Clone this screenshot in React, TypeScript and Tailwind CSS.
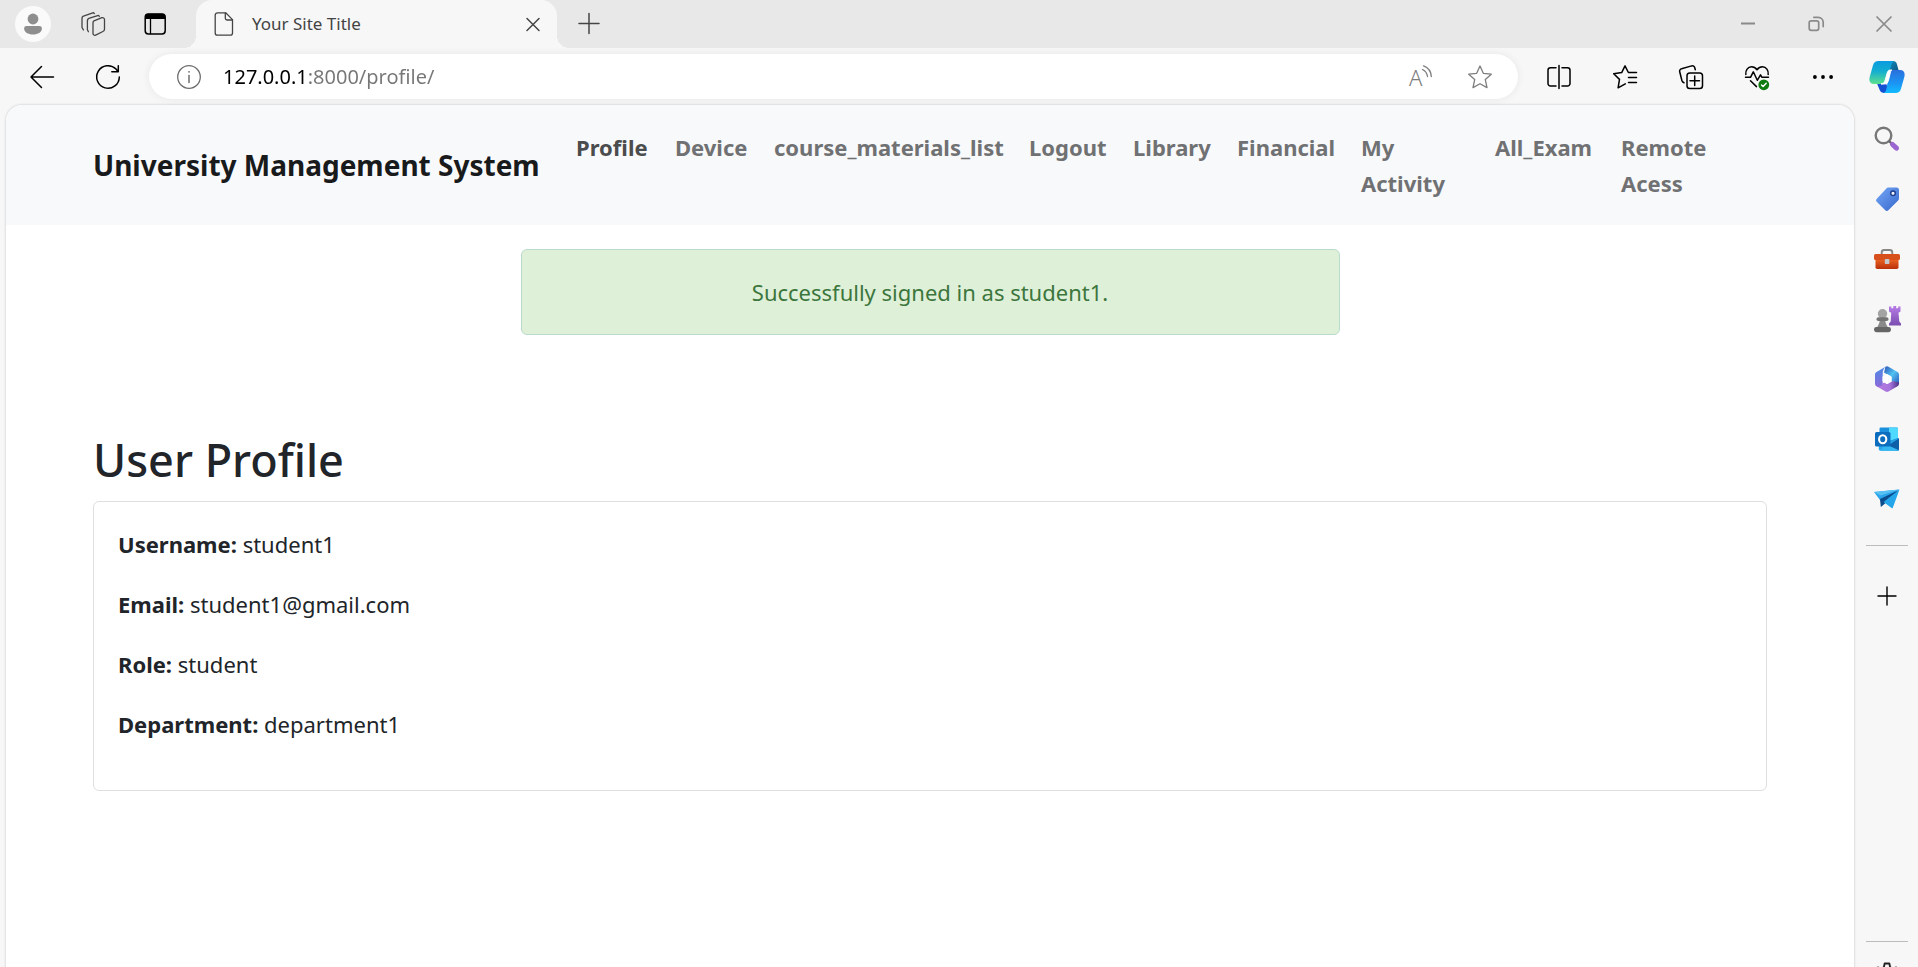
import type { ReactNode } from "react";

type NavItem = { label: string; href: string; active?: boolean; width: string };

const navItems: NavItem[] = [
  { label: "Profile", href: "#profile", active: true, width: "w-[99px]" },
  { label: "Device", href: "#device", width: "w-[99px]" },
  { label: "course_materials_list", href: "#materials", width: "w-[255px]" },
  { label: "Logout", href: "#logout", width: "w-[104px]" },
  { label: "Library", href: "#library", width: "w-[104px]" },
  { label: "Financial", href: "#financial", width: "w-[124px]" },
  { label: "My Activity", href: "#activity", width: "w-[134px]" },
  { label: "All_Exam", href: "#exam", width: "w-[126px]" },
  { label: "Remote Acess", href: "#remote", width: "w-[134px]" },
];

const profile = [
  { label: "Username:", value: "student1" },
  { label: "Email:", value: "student1@gmail.com" },
  { label: "Role:", value: "student" },
  { label: "Department:", value: "department1" },
];

function Icon({ children, size = "size-6" }: { children: ReactNode; size?: string }) {
  return (
    <svg
      viewBox="0 0 24 24"
      className={`${size} shrink-0 overflow-visible`}
      fill="none"
      stroke="currentColor"
      strokeWidth="1.3"
      strokeLinecap="round"
      strokeLinejoin="round"
      aria-hidden="true"
    >
      {children}
    </svg>
  );
}

function BarButton({ label, className, children }: { label: string; className: string; children: ReactNode }) {
  return (
    <button type="button" aria-label={label} className={`flex h-full shrink-0 items-center justify-center ${className}`}>
      {children}
    </button>
  );
}

function TabStrip() {
  return (
    <div className="flex h-12 items-stretch bg-[#e8e8e8] pl-[3px] text-[#444]">
      <BarButton label="Account" className="w-15">
        <svg viewBox="0 0 36 36" className="size-9" aria-hidden="true">
          <circle cx="18" cy="18" r="18" fill="#fafafa" />
          <circle cx="18" cy="13" r="5.4" fill="#8e8e8e" />
          <path d="M11.5 20h13a2.4 2.4 0 0 1 2.4 2.4c0 3.700-4 6-8.900 6s-8.900-2.300-8.900-6a2.400 2.400 0 0 1 2.400-2.400z" fill="#8e8e8e" />
        </svg>
      </BarButton>
      <BarButton label="Workspaces" className="w-15">
        <Icon>
          <path d="M13 8.800 20.900 5.700a2 2 0 0 1 2.600 1.900v9.600a2.500 2.500 0 0 1-1.600 2.300l-7.300 3.600a1.800 1.800 0 0 1-2.600-1.600V10.800a2.500 2.500 0 0 1 1-2z" />
          <path d="M18.300 4.200 17.500 3.400 8.500 6.200A2.800 2.800 0 0 0 6.400 9v8.700l1 2" />
          <path d="M13.300 1.500 12.500.7 3.200 3.900A2.500 2.500 0 0 0 1 6.400v9.100l1.400 2.400" />
        </Icon>
      </BarButton>
      <BarButton label="Tab actions" className="w-16 text-black">
        <Icon>
          <rect x="2.200" y="2" width="20" height="20" rx="3.200" strokeWidth="1.500" />
          <path d="M2 7V5a3.200 3.200 0 0 1 3.200-3.200h14A3.200 3.200 0 0 1 22.400 5v2z" fill="currentColor" stroke="none" />
          <path d="M7.500 7v14.500" />
        </Icon>
      </BarButton>
      <div className="relative ml-[9px] flex w-[361px] items-center rounded-t-2xl bg-[#f7f7f7] pl-4 before:absolute before:bottom-0 before:-left-3 before:size-3 before:bg-[radial-gradient(circle_at_0_0,#e8e8e8_12px,#f7f7f7_12px)] after:absolute after:-right-3 after:bottom-0 after:size-3 after:bg-[radial-gradient(circle_at_100%_0,#e8e8e8_12px,#f7f7f7_12px)]">
        <Icon>
          <path d="M5.500.8h8.200L20.500 7.600v13.300a2.300 2.300 0 0 1-2.300 2.300H5.500a2.300 2.300 0 0 1-2.300-2.300V3.100A2.300 2.300 0 0 1 5.500.8z" />
          <path d="M13.300 1v5.200A1.800 1.800 0 0 0 15.100 8h5.200" />
        </Icon>
        <span className="ml-4 flex-1 text-[17px]">Your Site Title</span>
        <BarButton label="Close tab" className="w-12">
          <Icon>
            <path d="m6 6.500 12 12M18 6.500 6 18.500" strokeWidth="1.500" />
          </Icon>
        </BarButton>
      </div>
      <BarButton label="New tab" className="w-16">
        <Icon>
          <path d="M12 1.500v20M2 11.500h20" strokeWidth="1.500" />
        </Icon>
      </BarButton>
      <div className="ml-auto flex text-[#8a8a8a]">
        <BarButton label="Minimize" className="w-17">
          <Icon>
            <path d="M5 11.500h14" strokeWidth="2" strokeLinecap="butt" />
          </Icon>
        </BarButton>
        <BarButton label="Restore" className="w-17">
          <Icon>
            <rect x="5.200" y="8.800" width="9.500" height="9.500" rx="2" strokeWidth="1.700" />
            <path d="M9.800 5.300h4.400a5 5 0 0 1 5 5v4.300" strokeWidth="1.700" />
          </Icon>
        </BarButton>
        <BarButton label="Close window" className="w-17">
          <Icon>
            <path d="m5 5 14 14M19 5 5 19" strokeWidth="1.700" />
          </Icon>
        </BarButton>
      </div>
    </div>
  );
}

function Copilot() {
  return (
    <svg viewBox="0 0 36 36" className="size-9 shrink-0" aria-hidden="true">
      <defs>
        <linearGradient id="cp-a" x1="0" y1="0" x2="0" y2="1">
          <stop offset="0" stopColor="#0a9be0" />
          <stop offset=".45" stopColor="#14aed0" />
          <stop offset="1" stopColor="#5fe08e" />
        </linearGradient>
        <linearGradient id="cp-b" x1="0" y1="0" x2="0" y2="1">
          <stop offset="0" stopColor="#2a6fdc" />
          <stop offset=".6" stopColor="#1a96f4" />
          <stop offset="1" stopColor="#12bcff" />
        </linearGradient>
        <linearGradient id="cp-c" x1="0" y1="0" x2="1" y2="1">
          <stop offset="0" stopColor="#128fc0" />
          <stop offset="1" stopColor="#0d4f7c" />
        </linearGradient>
      </defs>
      <path d="M20 2h4a4 4 0 0 1 3.800 2.800L29.500 11h-6c-3 0-4 1-5 4z" fill="url(#cp-c)" />
      <path d="M8 24.500h9l4 9.500h-6.500a4 4 0 0 1-3.700-2.800z" fill="#1650d2" />
      <path d="M9.500 2H26c-2 0-3 1.500-3.700 4l-4.400 14.500C17 23.500 15.500 25 12.500 25H5c-4 0-5.300-3-4.300-7L4 6.200C5 3.300 6.500 2 9.500 2z" fill="url(#cp-a)" />
      <path d="M23.500 11H31c4 0 5.300 3 4.300 7L32 29.800c-1 2.900-2.500 4.200-5.500 4.200H13.700c2 0 3-1.500 3.700-4l2.800-15c.7-3 1.300-4 3.300-4z" fill="url(#cp-b)" />
      <path d="M22.800 11h-1.600c-1.600 0-2.400 1-3 3l-2 7c-.8 2.700-1.800 4-4.200 4h3.500c2.300 0 3.400-1.500 4-3.800l1.700-7c.3-1.700.7-2.700 1.600-3.200z" fill="#fff" stroke="#fff" strokeWidth="1" strokeLinejoin="round" />
    </svg>
  );
}

function Toolbar() {
  return (
    <div className="flex h-[57px] items-stretch pl-[9px] text-black">
      <BarButton label="Back" className="w-[66px]">
        <Icon>
          <path d="M23.500 12H1M11.500 1.500 1 12l10.500 10.500" strokeWidth="1.500" />
        </Icon>
      </BarButton>
      <BarButton label="Refresh" className="w-[66px]">
        <Icon>
          <path d="M23.300 12A11.300 11.300 0 1 1 20 4l2 2.500M22.300.8v6h-6.500" strokeWidth="1.500" />
        </Icon>
      </BarButton>
      <div className="ml-2 flex h-[45px] flex-1 items-center self-center rounded-full bg-white shadow-[0_0_8px_rgba(0,0,0,0.07)]">
        <button type="button" aria-label="Site information" className="ml-7 text-[#6e6e6e]">
          <Icon>
            <circle cx="12" cy="12" r="11.300" />
            <path d="M12 10.500v7" strokeWidth="1.500" />
            <circle cx="12" cy="6.800" r=".9" fill="currentColor" stroke="none" />
          </Icon>
        </button>
        <input
          type="text"
          aria-label="Address"
          defaultValue="127.0.0.1:8000/profile/"
          className="ml-[22px] min-w-0 flex-1 bg-[linear-gradient(90deg,#000_85px,#767676_85px)] bg-clip-text text-xl text-transparent outline-none"
        />
        <BarButton label="Read aloud" className="w-15 text-[#7d7d7d]">
          <Icon>
            <text x="1" y="20.500" fontSize="22" fontWeight="300" fill="currentColor" stroke="none">A</text>
            <path d="M15.500.8a12 12 0 0 1 7.800 10.700M14.500 4.500a9 9 0 0 1 5 7" />
          </Icon>
        </BarButton>
        <BarButton label="Add to favorites" className="mr-2 w-15 text-[#7d7d7d]">
          <Icon>
            <path d="m12 1 3.300 7.300 8 .9-6 5.400 1.700 8L12 18.700l-7 3.900 1.700-8-6-5.400 8-.9z" />
          </Icon>
        </BarButton>
      </div>
      <div className="ml-2 flex">
        <BarButton label="Split screen" className="w-[66px]">
          <Icon>
            <path d="M9 2.800H3.500A2.500 2.500 0 0 0 1 5.300v13.200A2.500 2.500 0 0 0 3.500 21H9M15 2.800h5.500A2.500 2.500 0 0 1 23 5.300v13.200a2.500 2.500 0 0 1-2.500 2.500H15M12 .5v23" strokeWidth="1.500" />
          </Icon>
        </BarButton>
        <BarButton label="Favorites" className="w-[66px]">
          <Icon>
            <path d="M17 7.500h-1.600L12 .8 8.700 7.600l-8 1.200 5.800 5.600L5.100 22.800l7.200-4M15.500 7.500h8M15.500 12.500h8M15.500 17.500h8" strokeWidth="1.500" />
          </Icon>
        </BarButton>
        <BarButton label="Collections" className="w-[66px]">
          <Icon>
            <rect x="8" y="8" width="15.500" height="15.500" rx="2.800" strokeWidth="1.500" />
            <path d="M15.700 11v9.500M11 15.700h9.500M16.300 4.800 15.800 3A2.600 2.600 0 0 0 12.600.9L2.600 3.800A2.300 2.300 0 0 0 .7 6.700l2.200 8.800A3.500 3.500 0 0 0 5 17.800" strokeWidth="1.500" />
          </Icon>
        </BarButton>
        <BarButton label="Browser essentials" className="w-[66px]">
          <Icon>
            <path d="M.8 9.500C.3 5.500 2.800 1.800 6.500 1.800c2.300 0 4.200 1.200 5.500 3 1.300-1.800 3.200-3 5.500-3 3.700 0 6.200 3.700 5.700 7.700M.5 12.300h5l2.800-5.500 4 8.500 3.200-5.500 1.500 2.500h6.500M5.500 15.800l6 5.800" strokeWidth="1.500" />
            <circle cx="18.800" cy="19.800" r="5.400" fill="#107c10" stroke="none" />
            <path d="m16.500 20 1.600 1.600 3.100-3.300" stroke="#fff" strokeWidth="1.400" />
          </Icon>
        </BarButton>
        <BarButton label="Settings and more" className="w-[66px]">
          <Icon>
            <g fill="currentColor" stroke="none">
              <circle cx="3.900" cy="12" r="1.900" />
              <circle cx="12" cy="12" r="1.900" />
              <circle cx="20.100" cy="12" r="1.900" />
            </g>
          </Icon>
        </BarButton>
        <BarButton label="Copilot" className="w-[62px]">
          <Copilot />
        </BarButton>
      </div>
    </div>
  );
}

function SideButton({ label, children }: { label: string; children: ReactNode }) {
  return (
    <button type="button" aria-label={label} className="flex h-15 w-full shrink-0 items-center justify-center">
      <svg viewBox="0 0 28 28" className="size-7" aria-hidden="true">
        {children}
      </svg>
    </button>
  );
}

function Sidebar() {
  return (
    <aside className="ml-0.5 flex w-[62px] shrink-0 flex-col items-center overflow-hidden pt-1">
      <SideButton label="Search">
        <defs>
          <linearGradient id="sb-purple" x1="0" y1="0" x2="0" y2="1">
            <stop offset="0" stopColor="#b77be6" />
            <stop offset="1" stopColor="#7a4fb0" />
          </linearGradient>
        </defs>
        <circle cx="10.500" cy="10.500" r="7.800" fill="none" stroke="#777" strokeWidth="2.400" />
        <path d="m16 16 3.500 3.500" stroke="#666" strokeWidth="2.400" />
        <path d="m19.500 19.500 4 3.700" stroke="#9a66cf" strokeWidth="5" strokeLinecap="round" />
      </SideButton>
      <SideButton label="Shopping">
        <defs>
          <linearGradient id="sb-blue" x1="0" y1="0" x2="1" y2="1">
            <stop offset="0" stopColor="#74a8f7" />
            <stop offset="1" stopColor="#3767cc" />
          </linearGradient>
        </defs>
        <path d="M15.200 2.500h8.300a2.500 2.500 0 0 1 2.500 2.500v8.200c0 .9-.3 1.600-.9 2.200l-9.500 9.600a2.500 2.500 0 0 1-3.600 0l-8-8a2.500 2.500 0 0 1 0-3.600l9.400-10c.5-.6 1.100-.9 1.800-.9z" fill="url(#sb-blue)" />
        <circle cx="20" cy="8.300" r="2.300" fill="#f5f7fb" stroke="#203f8f" strokeWidth="1.500" />
      </SideButton>
      <SideButton label="Tools">
        <defs>
          <linearGradient id="sb-red" x1="0" y1="0" x2="0" y2="1">
            <stop offset="0" stopColor="#f26a24" />
            <stop offset="1" stopColor="#b9300b" />
          </linearGradient>
        </defs>
        <path d="M8.700 10V7.500a2.500 2.500 0 0 1 2.500-2.500h5.600a2.500 2.500 0 0 1 2.500 2.500V10" fill="none" stroke="#868686" strokeWidth="1.900" />
        <rect x="2.500" y="13" width="23" height="11" rx="1.800" fill="url(#sb-red)" />
        <rect x="1" y="9" width="26" height="6" rx="1.500" fill="#d8501b" />
        <rect x="11.800" y="14" width="4.600" height="5" rx=".8" fill="#c4c8cc" />
      </SideButton>
      <SideButton label="Games">
        <path d="M16 1.500h2.300v1.800h2V1h2.900v2.300h2V1.500h2.300v5l-2 1.300.8 8.700 1.700 2v2H16v-2l1.700-2 .5-8.700L16 6.500z" fill="url(#sb-purple)" />
        <circle cx="9.500" cy="8.700" r="4.700" fill="#a3a3a3" />
        <path d="M6.800 14h5.400c0 3 .8 5.500 2.500 8h-10.400c1.700-2.500 2.500-5 2.500-8z" fill="#8a8a8a" />
        <rect x="3.500" y="12.300" width="12" height="3.700" rx="1.800" fill="#747474" />
        <rect x="1" y="22" width="17" height="5.200" rx="2.400" fill="#666" />
      </SideButton>
      <SideButton label="Microsoft 365">
        <defs>
          <linearGradient id="ms-a" x1="0" y1="0" x2="0" y2="1">
            <stop offset="0" stopColor="#4a8be8" />
            <stop offset="1" stopColor="#8a6ad8" />
          </linearGradient>
          <linearGradient id="ms-b" x1="0" y1="0" x2="1" y2="1">
            <stop offset="0" stopColor="#2c4fb4" />
            <stop offset=".5" stopColor="#51c3f2" />
            <stop offset="1" stopColor="#2c5cc0" />
          </linearGradient>
          <linearGradient id="ms-c" x1="0" y1="0" x2="1" y2="0">
            <stop offset="0" stopColor="#b97be0" />
            <stop offset=".6" stopColor="#a674dc" />
            <stop offset="1" stopColor="#4b3386" />
          </linearGradient>
        </defs>
        <path d="M12.500 1.700a3 3 0 0 1 3 0l9 5.200A3 3 0 0 1 26 9.500v9.300L18.500 16V12L11 7.500z" fill="url(#ms-b)" />
        <path d="M26 17.500v1.200a3 3 0 0 1-1.500 2.600l-9 5.200a3 3 0 0 1-3 0l-9-5.200 8-3.800 3 1.500 5-3z" fill="url(#ms-c)" />
        <path d="M13 1.500C10.500 3.500 9.700 5.500 9.700 8.500v9.300c0 3-2.700 4.700-5.700 3.700l-.5-.2A3 3 0 0 1 2 18.700V9.500a3 3 0 0 1 1.500-2.600z" fill="url(#ms-a)" />
        <path d="M14 10 17.500 12v4L14 18l-3.500-2v-4z" fill="#fff" stroke="#fff" strokeWidth="2" strokeLinejoin="round" />
      </SideButton>
      <SideButton label="Outlook">
        <rect x="6.500" y="2.500" width="18.500" height="15" rx="1.300" fill="#1b8fdb" />
        <path d="M16 2.500h7.700A1.300 1.300 0 0 1 25 3.800V13l-9 3z" fill="#50d9ff" />
        <path d="M6.500 12 16 17l10-4v11a1.800 1.800 0 0 1-1.800 1.800H7.500A1.800 1.800 0 0 1 5.700 24z" fill="#28a8ea" />
        <path d="M26 13.300 12 22.500l12.500 3.200A1.800 1.800 0 0 0 26 24z" fill="#0f5fa8" />
        <path d="m12 19 14 6.200a1.800 1.800 0 0 1-1.500.6H8z" fill="#35b8f1" />
        <rect x="2" y="7" width="15.500" height="14.500" rx="1.500" fill="#0c6cbd" />
        <ellipse cx="9.700" cy="14.200" rx="3.600" ry="4" fill="none" stroke="#fff" strokeWidth="2.100" />
      </SideButton>
      <SideButton label="Drop">
        <path d="M1 7 26.500 4.500 8.500 17z" fill="#2ba4ea" />
        <path d="M7 14 26 5 11.500 19 7.800 22z" fill="#0b4c8c" />
        <path d="m10.500 17 16-12.500-6.700 18.200a.8.8 0 0 1-1.200.3z" fill="#25a6ea" />
        <path d="M1 7 26.500 4.500 7.500 10.500z" fill="#57c1f4" />
      </SideButton>
      <hr className="mt-4 w-[42px] border-[#bcbcbc]" />
      <button type="button" aria-label="Customize" className="mt-5 flex h-15 w-full shrink-0 items-center justify-center text-black">
        <Icon>
          <path d="M12 3v18M3 12h18" strokeWidth="1.400" />
        </Icon>
      </button>
      <div className="mt-auto flex h-[26px] w-full shrink-0 flex-col items-center overflow-hidden">
        <hr className="w-[42px] shrink-0 border-[#bcbcbc]" />
        <button type="button" aria-label="Settings" className="mt-5 text-[#222]">
          <Icon size="size-7">
            <path d="M9.300 4.500 10 1.300h4l.7 3.200 2 1.200 3.200-1 2 3.500-2.400 2.200v3.200l2.400 2.200-2 3.500-3.200-1-2 1.200-.7 3.200h-4l-.7-3.200-2-1.200-3.200 1-2-3.500 2.400-2.200v-3.200L2.100 8.200l2-3.500 3.200 1z" strokeWidth="1.600" />
            <circle cx="12" cy="12" r="3" />
          </Icon>
        </button>
      </div>
    </aside>
  );
}

export default function App() {
  return (
    <div className="flex h-screen flex-col overflow-hidden bg-[#f7f7f7] font-['Noto_Sans','Open_Sans',sans-serif]">
      <TabStrip />
      <Toolbar />
      <div className="flex min-h-0 flex-1">
        <div className="ml-1.5 min-w-0 flex-1 overflow-hidden rounded-t-2xl bg-white text-[22px] leading-9 text-[#212529] shadow-[0_0_2px_1px_rgba(0,0,0,0.1)]">
          <nav className="bg-[#f8f9fb] py-3">
            <div className="mx-auto flex max-w-[1710px] items-center px-[18px]">
              <a href="#home" className="mr-6 w-[447px] text-[28px] font-bold whitespace-nowrap text-[#191a1b]">
                University Management System
              </a>
              <ul className="flex font-bold">
                {navItems.map((item) => (
                  <li key={item.label} className={item.width}>
                    <a
                      href={item.href}
                      aria-current={item.active ? "page" : undefined}
                      className={`block px-3 py-3 ${item.active ? "text-[#4b4c4d]" : "text-[#707173]"}`}
                    >
                      {item.label}
                    </a>
                  </li>
                ))}
              </ul>
            </div>
          </nav>
          <main className="mx-auto max-w-[1710px] px-[18px] pt-6">
            <div role="status" className="mx-auto max-w-[819px] rounded-md border border-[#badbcc] bg-[#dff0d8] p-6 text-center text-[#3c763d]">
              Successfully signed in as student1.
            </div>
            <h1 className="mt-24 mb-3 text-[45px] leading-[58px] font-medium">User Profile</h1>
            <section className="rounded-md border border-[#dfdfdf] px-6 pt-6">
              {profile.map((row) => (
                <p key={row.label} className="mb-6">
                  <strong className="font-bold">{row.label}</strong> {row.value}
                </p>
              ))}
              <div className="h-6" />
            </section>
          </main>
        </div>
        <Sidebar />
      </div>
    </div>
  );
}
